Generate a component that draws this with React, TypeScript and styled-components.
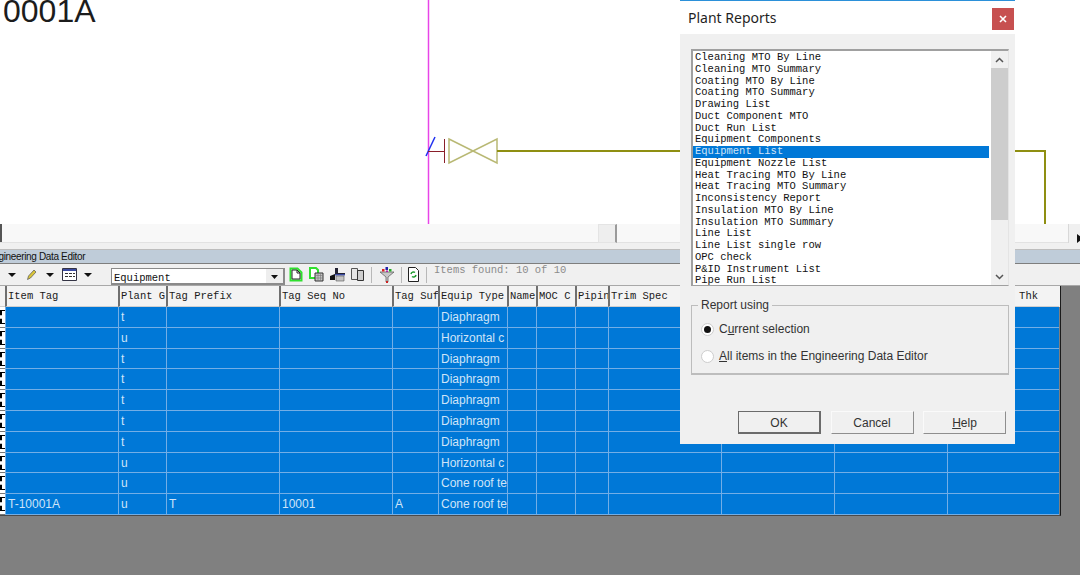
import React from 'react'
import styled, { createGlobalStyle } from 'styled-components'

const GlobalStyle = createGlobalStyle`
  html, body {
    margin: 0;
    padding: 0;
    background: #808080;
  }
  * {
    box-sizing: border-box;
  }
`

const Page = styled.div`
  position: relative;
  width: 1080px;
  height: 575px;
  overflow: hidden;
  background: #808080;
  font-family: 'Liberation Sans', Arial, sans-serif;
`

const Canvas = styled.div`
  position: relative;
  height: 224px;
  background: #ffffff;
  overflow: hidden;
`

const DrawingNumber = styled.div`
  position: absolute;
  left: 3px;
  top: -5px;
  font-size: 32px;
  line-height: 32px;
  color: #1c1c1c;
`

const Drawing = styled.svg`
  position: absolute;
  left: 0;
  top: 0;
`

const HScroll = styled.div`
  display: flex;
  justify-content: flex-end;
  height: 19px;
  background: #f8f8f8;
  border-bottom: 1px solid #e2e2e2;
`

const ScrollEdge = styled.div`
  width: 2px;
  background: #555;
  margin-right: auto;
`

const ScrollThumb = styled.div`
  width: 19px;
  height: 19px;
  margin-right: 451px;
  background: #eeeeee;
  border: 1px solid #e4e4e4;
  border-right: 2px solid #9a9a9a;
`

const ScrollArrow = styled.div`
  width: 12px;
  height: 19px;
  padding: 5px 0 0 8px;
  background: #f0f0f0;
  border-left: 1px solid #d8d8d8;
  overflow: hidden;
`

const Gap = styled.div`
  height: 7px;
  background: #f0f0f0;
  border-bottom: 1px solid #bdbdbd;
`

const TitleBar = styled.div`
  height: 14px;
  background: #bfccd9;
  border-bottom: 1px solid #7e7e7e;
  font-size: 10px;
  line-height: 13px;
  letter-spacing: -0.35px;
  color: #111;
  white-space: nowrap;
  overflow: hidden;
`

const TitleText = styled.span`
  display: block;
  margin-left: -13px;
`

const Toolbar = styled.div`
  display: flex;
  align-items: center;
  height: 22px;
  background: #f0f0f0;
  border-bottom: 1px solid #a8a8a8;
`

const ToolIcon = styled.svg<{ $ml?: number }>`
  flex: none;
  margin-left: ${(p) => p.$ml ?? 0}px;
`

const Combo = styled.div`
  display: flex;
  width: 174px;
  height: 17px;
  margin-left: 19px;
  margin-top: 3px;
  background: #fff;
  border: 1px solid #8a8a8a;
  border-right-width: 2px;
  border-bottom-width: 2px;
  font-family: 'Liberation Mono', 'Courier New', monospace;
  font-size: 10.5px;
  line-height: 19px;
  color: #111;
  padding-left: 2px;
`

const ComboLabel = styled.span`
  flex: 1;
`

const ComboArrow = styled.span`
  width: 17px;
  background: #eeeeee;
  padding: 6px 0 0 5px;
`

const ToolSep = styled.div<{ $ml: number }>`
  width: 1px;
  height: 16px;
  margin-left: ${(p) => p.$ml}px;
  background: #b8b8b8;
`

const ItemsFound = styled.span`
  margin-left: 7px;
  margin-bottom: 9px;
  font-family: 'Liberation Mono', 'Courier New', monospace;
  font-size: 10.5px;
  color: #8c8c8c;
  white-space: pre;
`

const Grid = styled.div`
  width: 1061px;
  border-right: 1px solid #1b1b1b;
  border-bottom: 1px solid #4a4a4a;
`

const COLUMNS = '5px 113px 48px 113px 113px 46px 69px 29px 39px 33px 113px 113px 113px 112px'

const HeaderRow = styled.div`
  display: grid;
  grid-template-columns: ${COLUMNS};
  height: 21px;
  background: #f3f3f3;
`

const HeaderCell = styled.div<{ $right?: boolean }>`
  padding-left: 1px;
  border-left: 2px solid #6f6f6f;
  border-bottom: 1px solid #cfcfcf;
  font-family: 'Liberation Mono', 'Courier New', monospace;
  font-size: 10.5px;
  line-height: 20px;
  color: #1a1a1a;
  white-space: nowrap;
  overflow: hidden;
  text-align: ${(p) => (p.$right ? 'right' : 'left')};
`

const CornerCell = styled.div`
  border-bottom: 1px solid #cfcfcf;
`

const ThkLabel = styled.span`
  margin-right: 21px;
`

const DataRow = styled.div`
  display: grid;
  grid-template-columns: ${COLUMNS};
  height: 20.8px;
`

const RowHead = styled.div`
  background: #ffffff;
  border-bottom: 1px solid #777;
`

const RowMark = styled.div`
  width: 5px;
  height: 14px;
  margin-top: 3px;
  border-top: 1px solid #000;
  border-bottom: 1px solid #000;
  border-left: 2px dashed #000;
`

const DataCell = styled.div`
  padding-left: 2px;
  background: #0078d7;
  border-left: 1px solid #73aee6;
  border-bottom: 1px solid #73aee6;
  font-size: 12px;
  line-height: 20px;
  color: #cfe4f8;
  white-space: nowrap;
  overflow: hidden;
`

const Dialog = styled.div`
  position: absolute;
  left: 680px;
  top: 0;
  width: 335px;
  height: 444px;
  display: flex;
  flex-direction: column;
  background: #f0f0f0;
  border-top: 1px solid #2b90d9;
`

const DialogHead = styled.div`
  display: flex;
  align-items: flex-start;
  justify-content: space-between;
  height: 33px;
  padding: 7px 1px 0 8px;
  background: #ffffff;
`

const DialogTitle = styled.span`
  font-family: 'Noto Sans', 'Liberation Sans', sans-serif;
  font-size: 14px;
  line-height: 20px;
  color: #1f1f1f;
`

const CloseButton = styled.div`
  width: 22px;
  height: 22px;
  display: flex;
  align-items: center;
  justify-content: center;
  background: #c75050;
`

const DialogBody = styled.div`
  display: flex;
  flex-direction: column;
  flex: 1;
  padding: 15px 6px 0 11px;
`

const ListBox = styled.div`
  display: flex;
  height: 237px;
  background: #ffffff;
  border: 1px solid #a0a0a0;
  border-top-width: 2px;
  border-left-width: 2px;
  border-right-color: #e4e4e4;
`

const ListItems = styled.div`
  flex: 1;
  min-width: 0;
  padding-top: 1px;
  overflow: hidden;
`

const ListItem = styled.div<{ $selected?: boolean }>`
  height: 11.75px;
  padding-left: 2px;
  font-family: 'Liberation Mono', 'Courier New', monospace;
  font-size: 10.5px;
  line-height: 11.75px;
  white-space: nowrap;
  color: ${(p) => (p.$selected ? '#cfe4f8' : '#111111')};
  background: ${(p) => (p.$selected ? '#0078d7' : 'transparent')};
`

const VScroll = styled.div`
  display: flex;
  flex-direction: column;
  width: 17px;
  margin-left: 2px;
  background: #f0f0f0;
`

const VArrow = styled.div`
  display: flex;
  align-items: center;
  justify-content: center;
  height: 17px;
`

const VThumb = styled.div`
  height: 152px;
  background: #cdcdcd;
`

const VTrack = styled.div`
  flex: 1;
`

const GroupBox = styled.fieldset`
  display: flex;
  flex-direction: column;
  gap: 11px;
  height: 76px;
  margin: 13px 0 0;
  padding: 9px 0 0 9px;
  border: 1px solid #bdbdbd;
  border-width: 1px 1px 2px 1px;
`

const GroupLegend = styled.legend`
  margin-left: -3px;
  padding: 0 3px 0 3px;
  font-size: 12px;
  line-height: 13px;
  color: #333;
`

const RadioRow = styled.div`
  display: flex;
  align-items: center;
  gap: 5px;
  height: 16px;
  font-size: 12px;
  color: #333;
`

const RadioDot = styled.div<{ $checked?: boolean }>`
  width: 13px;
  height: 13px;
  border-radius: 50%;
  background: #ffffff;
  border: 1px solid #cdcdcd;
  display: flex;
  align-items: center;
  justify-content: center;
  &::after {
    content: '';
    width: 7px;
    height: 7px;
    border-radius: 50%;
    background: ${(p) => (p.$checked ? '#111' : 'transparent')};
  }
`

const ButtonRow = styled.div`
  display: flex;
  justify-content: flex-end;
  gap: 9.5px;
  margin-top: 36px;
  padding-right: 3px;
`

const DialogButton = styled.div<{ $isDefault?: boolean }>`
  width: 83px;
  height: 23px;
  text-align: center;
  font-size: 12px;
  line-height: 23px;
  color: #333;
  background: #f0f0f0;
  border: 1px solid #fafafa;
  border-right: 1px solid #8e8e8e;
  border-bottom: 1px solid #8e8e8e;
  ${(p) => p.$isDefault && 'border: 1px solid #6b6b6b; border-right-width: 2px; border-bottom-width: 2px;'}
`

type Row = { tag?: string; plant: string; prefix?: string; seq?: string; suffix?: string; type: string }

const rows: Row[] = [
  { plant: 't', type: 'Diaphragm' },
  { plant: 'u', type: 'Horizontal c' },
  { plant: 't', type: 'Diaphragm' },
  { plant: 't', type: 'Diaphragm' },
  { plant: 't', type: 'Diaphragm' },
  { plant: 't', type: 'Diaphragm' },
  { plant: 't', type: 'Diaphragm' },
  { plant: 'u', type: 'Horizontal c' },
  { plant: 'u', type: 'Cone roof te' },
  { tag: 'T-10001A', plant: 'u', prefix: 'T', seq: '10001', suffix: 'A', type: 'Cone roof te' },
]

const headers = ['Item Tag', 'Plant G', 'Tag Prefix', 'Tag Seq No', 'Tag Suf', 'Equip Type', 'Name', 'MOC C', 'Pipin', 'Trim Spec', '', '']

const reports = [
  'Cleaning MTO By Line',
  'Cleaning MTO Summary',
  'Coating MTO By Line',
  'Coating MTO Summary',
  'Drawing List',
  'Duct Component MTO',
  'Duct Run List',
  'Equipment Components',
  'Equipment List',
  'Equipment Nozzle List',
  'Heat Tracing MTO By Line',
  'Heat Tracing MTO Summary',
  'Inconsistency Report',
  'Insulation MTO By Line',
  'Insulation MTO Summary',
  'Line List',
  'Line List single row',
  'OPC check',
  'P&ID Instrument List',
  'Pipe Run List',
]

const DownCaret = ({ ml }: { ml?: number }) => (
  <ToolIcon $ml={ml} width="8" height="4" viewBox="0 0 8 4">
    <path d="M0 0h8L4 4z" fill="#111" />
  </ToolIcon>
)

const App = () => {
  return (
    <Page>
      <GlobalStyle />
      <Canvas>
        <DrawingNumber>0001A</DrawingNumber>
        <Drawing width="1080" height="224" viewBox="0 0 1080 224" fill="none">
          <path d="M428.500 0v224" stroke="#e845e8" strokeWidth="1.500" />
          <path d="M426 156l9-19" stroke="#2030f0" strokeWidth="1.500" />
          <path d="M428 151.500h16M444.500 139v24" stroke="#8a1f2a" />
          <path d="M449 139l48 24V139l-48 24z" stroke="#b9b975" strokeWidth="1.500" />
          <path d="M497 151h548v73" stroke="#8f8f12" strokeWidth="2" />
        </Drawing>
      </Canvas>
      <HScroll>
        <ScrollEdge />
        <ScrollThumb />
        <ScrollArrow>
          <svg width="6" height="9" viewBox="0 0 6 9">
            <path d="M0 0l6 4.500L0 9z" fill="#111" />
          </svg>
        </ScrollArrow>
      </HScroll>
      <Gap />
      <TitleBar>
        <TitleText>Engineering Data Editor</TitleText>
      </TitleBar>
      <Toolbar>
        <DownCaret ml={8} />
        <ToolIcon $ml={11} width="10" height="11" viewBox="0 0 10 11">
          <path d="M0.500 10.500l1-3.500 5.500-6 2 2-5.500 6z" fill="#d9c53a" stroke="#555" strokeWidth="0.700" />
        </ToolIcon>
        <DownCaret ml={9} />
        <ToolIcon $ml={8} width="15" height="13" viewBox="0 0 15 13" fill="none">
          <path d="M.500.500h14v12H.500z" fill="#fff" stroke="#334" />
          <path d="M1 1h13v2H1z" fill="#3a4aa0" />
          <path d="M3 5h3v1H3zM7 5h3v1H7zM11 5h2v1h-2zM3 8h3v1H3zM7 8h3v1H7zM11 8h2v1h-2z" fill="#333" />
        </ToolIcon>
        <DownCaret ml={7} />
        <Combo>
          <ComboLabel>Equipment</ComboLabel>
          <ComboArrow>
            <svg width="7" height="4" viewBox="0 0 7 4" style={{ display: 'block' }}>
              <path d="M0 0h7L3.500 4z" fill="#111" />
            </svg>
          </ComboArrow>
        </Combo>
        <ToolIcon $ml={4} width="15" height="15" viewBox="0 0 15 15" fill="none">
          <path d="M1.500 1.500h7l4 4v8h-11z" fill="#fff" stroke="#2fe02f" strokeWidth="2" />
          <path d="M3 3h5l3 3v6H3zM8 3v3h3" stroke="#222" />
        </ToolIcon>
        <ToolIcon $ml={5} width="15" height="15" viewBox="0 0 15 15" fill="none">
          <path d="M1 1h6l2 2v8H1z" fill="#fff" stroke="#2fe02f" strokeWidth="2" />
          <path d="M6 6h8v8H6z" fill="#c4c4c4" stroke="#333" />
          <path d="M6 8.500h8M6 11h8M9 6v8M11.500 6v8" stroke="#777" strokeWidth="0.600" />
        </ToolIcon>
        <ToolIcon $ml={6} width="15" height="15" viewBox="0 0 15 15">
          <path d="M5 1h3v5h7v1H5z" fill="#223" />
          <path d="M0 9l5-2v6H0z" fill="#111" />
          <path d="M5 7h10v1.500H5z" fill="#3a4aa0" />
          <path d="M6 9h8v5H6z" fill="#c4c4c4" stroke="#555" strokeWidth="0.600" />
        </ToolIcon>
        <ToolIcon $ml={5} width="15" height="15" viewBox="0 0 15 15" fill="none">
          <path d="M1.500 1.500h6v11h-6z" fill="#e6e6e6" stroke="#555" />
          <path d="M7.500 3.500h6v10h-6z" fill="#cfcfcf" stroke="#333" />
        </ToolIcon>
        <ToolSep $ml={6} />
        <ToolIcon $ml={8} width="14" height="16" viewBox="0 0 14 16">
          <path d="M0 5h14L8 10v5H6v-5z" fill="#c8c8c8" stroke="#555" strokeWidth="0.700" />
          <path d="M6 14h2v2H6z" fill="#c22" />
          <path d="M2 2h2.500v2.500H2z" fill="#d22" />
          <path d="M5.500 0H8v3H5.500z" fill="#22a" />
          <path d="M9 2h2.500v2.500H9z" fill="#2a2" />
          <path d="M6 3.500h2V5H6z" fill="#a2a" />
        </ToolIcon>
        <ToolSep $ml={7} />
        <ToolIcon $ml={5} width="13" height="15" viewBox="0 0 13 15" fill="none">
          <path d="M1.500.500h7l3 3v11h-10z" fill="#fff" stroke="#222" />
          <path d="M4 7a2.500 2.500 0 0 1 4-1.500M9 8a2.500 2.500 0 0 1-4 1.500" stroke="#1a9a2a" strokeWidth="1.500" />
        </ToolIcon>
        <ToolSep $ml={6} />
        <ItemsFound>Items found: 10 of 10</ItemsFound>
      </Toolbar>
      <Grid>
        <HeaderRow>
          <CornerCell />
          {headers.map((h, i) => (
            <HeaderCell key={i}>{h}</HeaderCell>
          ))}
          <HeaderCell $right>
            <ThkLabel>Thk</ThkLabel>
          </HeaderCell>
        </HeaderRow>
        {rows.map((r, i) => (
          <DataRow key={i}>
            <RowHead>
              <RowMark />
            </RowHead>
            <DataCell>{r.tag}</DataCell>
            <DataCell>{r.plant}</DataCell>
            <DataCell>{r.prefix}</DataCell>
            <DataCell>{r.seq}</DataCell>
            <DataCell>{r.suffix}</DataCell>
            <DataCell>{r.type}</DataCell>
            {Array.from({ length: 7 }).map((_, c) => (
              <DataCell key={c} />
            ))}
          </DataRow>
        ))}
      </Grid>
      <Dialog>
        <DialogHead>
          <DialogTitle>Plant Reports</DialogTitle>
          <CloseButton>
            <svg width="8" height="8" viewBox="0 0 8 8" fill="none">
              <path d="M1 1l6 6M7 1L1 7" stroke="#fff" strokeWidth="1.600" />
            </svg>
          </CloseButton>
        </DialogHead>
        <DialogBody>
          <ListBox>
            <ListItems>
              {reports.map((name) => (
                <ListItem key={name} $selected={name === 'Equipment List'}>
                  {name}
                </ListItem>
              ))}
            </ListItems>
            <VScroll>
              <VArrow>
                <svg width="9" height="6" viewBox="0 0 9 6" fill="none">
                  <path d="M1 5l3.500-3.500L8 5" stroke="#555" strokeWidth="1.500" />
                </svg>
              </VArrow>
              <VThumb />
              <VTrack />
              <VArrow>
                <svg width="9" height="6" viewBox="0 0 9 6" fill="none">
                  <path d="M1 1l3.500 3.500L8 1" stroke="#555" strokeWidth="1.500" />
                </svg>
              </VArrow>
            </VScroll>
          </ListBox>
          <GroupBox>
            <GroupLegend>Report using</GroupLegend>
            <RadioRow>
              <RadioDot $checked />
              <span>
                C<u>u</u>rrent selection
              </span>
            </RadioRow>
            <RadioRow>
              <RadioDot />
              <span>
                <u>A</u>ll items in the Engineering Data Editor
              </span>
            </RadioRow>
          </GroupBox>
          <ButtonRow>
            <DialogButton $isDefault>OK</DialogButton>
            <DialogButton>Cancel</DialogButton>
            <DialogButton>
              <u>H</u>elp
            </DialogButton>
          </ButtonRow>
        </DialogBody>
      </Dialog>
    </Page>
  )
}

export default App
